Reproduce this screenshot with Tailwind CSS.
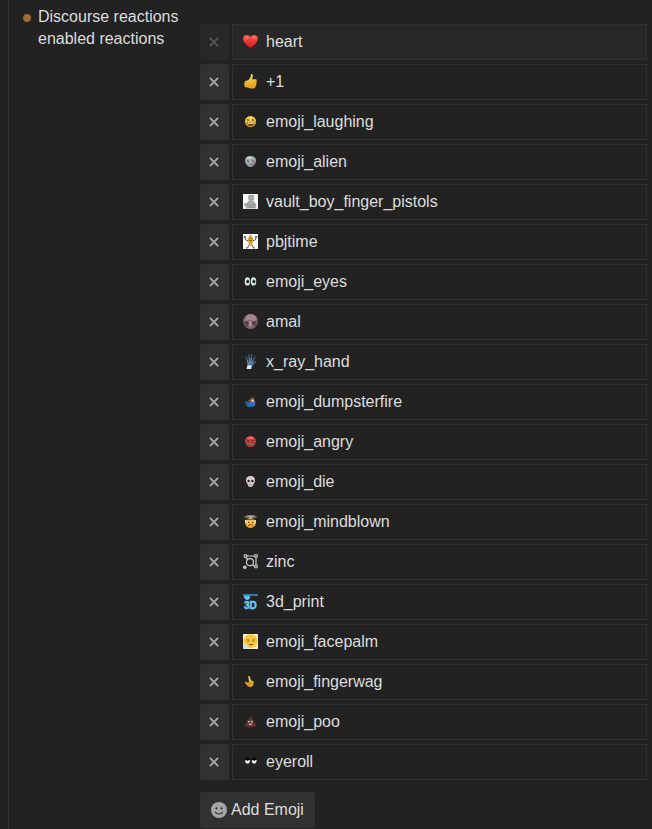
<!DOCTYPE html>
<html lang="en">
<head>
    <meta charset="UTF-8">
    <meta name="viewport" content="width=device-width, initial-scale=1.0">
    <title>Discourse reactions settings</title>
    <script src="https://cdn.jsdelivr.net/npm/@tailwindcss/browser@4"></script>
</head>
<body class="bg-[#222222] font-['Liberation_Sans',Arial,sans-serif] text-base text-[#dddddd]">
    <!-- Shared icon and gradients -->
    <svg class="absolute size-0" aria-hidden="true">
        <symbol id="times" viewBox="0 0 10 10">
            <path d="M.9.9 9.100 9.100M9.100.9.9 9.100" fill="none" stroke="currentColor" stroke-width="1.900"/>
        </symbol>
        <linearGradient id="gold" x2="0" y2="1">
            <stop stop-color="#ffdf62"/>
            <stop offset="1" stop-color="#e39a17"/>
        </linearGradient>
        <linearGradient id="red" x2="0" y2="1">
            <stop stop-color="#ff5a50"/>
            <stop offset="1" stop-color="#d8141c"/>
        </linearGradient>
    </svg>

    <main class="ml-2 flex min-h-screen border-l border-[#333333]">
        <!-- Setting name -->
        <div class="flex w-[191px] shrink-0 pt-[6px] pl-[14px]">
            <span class="mt-2 mr-[7px] size-2 shrink-0 rounded-full bg-[#9f6b35]"></span>
            <h1 class="leading-[22px]">Discourse reactions enabled reactions</h1>
        </div>

        <!-- Setting value -->
        <div class="min-w-0 flex-1 pt-6 pr-[5px]">
            <ul class="space-y-1">
                <li class="flex h-9 gap-[3px]">
                    <button type="button" disabled aria-label="Remove heart" class="flex w-[29px] shrink-0 items-center justify-center rounded-xs bg-[#282828] pr-px text-[#555555]"><svg class="size-[10px]"><use href="#times"/></svg></button>
                    <div class="flex flex-1 items-center gap-2 border border-[#313131] bg-[#282828] px-[10px]">
                        <svg class="mb-px size-[15px]" viewBox="0 0 15 15"><path d="M7.500 14C5 12.500 0 8.500 0 4.600 0 2.400 1.700 1 3.700 1c1.700 0 3.100.8 3.800 2.200C8.200 1.800 9.600 1 11.300 1 13.300 1 15 2.400 15 4.600c0 3.900-5 7.900-7.500 9.400Z" fill="url(#red)"/><ellipse cx="3.800" cy="3.500" rx="2" ry="1.200" fill="#ff6e64"/><ellipse cx="11" cy="3.500" rx="2" ry="1.200" fill="#ff6e64"/></svg>
                        <span>heart</span>
                    </div>
                </li>
                <li class="flex h-9 gap-[3px]">
                    <button type="button" aria-label="Remove +1" class="flex w-[29px] shrink-0 items-center justify-center rounded-xs bg-[#313131] pr-px text-[#a6a6a6]"><svg class="size-[10px]"><use href="#times"/></svg></button>
                    <div class="flex flex-1 items-center gap-2 border border-[#313131] px-[10px]">
                        <svg class="mb-px size-[15px]" viewBox="0 0 15 15"><path d="M2 7.200 5.500 6 7.600 3 8 .4c.2-.6 1.600-.4 1.800.8.200 1.400-.3 2.800-.8 4.100l3.600-.1c1.300.1 1.400 1.500.7 1.900.7.500.7 1.600-.1 2 .6.600.4 1.600-.3 1.900.4.700 0 1.500-.7 1.700.1.900-.4 1.600-1.300 1.700-2.600.4-4.600 0-6.300-.9L2 13.300C1 11.500 1 9 2 7.200Z" fill="url(#gold)"/><path d="M9.500 7.300h3.400M9.500 9.300h3.400M9.400 11.300h2.900" stroke="#d99a20" stroke-width=".5"/></svg>
                        <span>+1</span>
                    </div>
                </li>
                <li class="flex h-9 gap-[3px]">
                    <button type="button" aria-label="Remove emoji_laughing" class="flex w-[29px] shrink-0 items-center justify-center rounded-xs bg-[#313131] pr-px text-[#a6a6a6]"><svg class="size-[10px]"><use href="#times"/></svg></button>
                    <div class="flex flex-1 items-center gap-2 border border-[#313131] px-[10px]">
                        <svg class="mb-px size-[15px]" viewBox="0 0 15 15"><circle cx="7.500" cy="7.500" r="5.500" fill="url(#gold)"/><path d="M4 5.500 6 6 4.300 6.900M11 5 9 6l2 .6" fill="none" stroke="#6b4310" stroke-width=".8"/><path d="M3.700 8.300h7.800c-.3 2.200-1.800 3.700-3.900 3.700s-3.700-1.500-3.900-3.700Z" fill="#6b4310"/><path d="M4.300 8.400h6.700l-.4 1.400H4.700Z" fill="#fff4d8"/></svg>
                        <span>emoji_laughing</span>
                    </div>
                </li>
                <li class="flex h-9 gap-[3px]">
                    <button type="button" aria-label="Remove emoji_alien" class="flex w-[29px] shrink-0 items-center justify-center rounded-xs bg-[#313131] pr-px text-[#a6a6a6]"><svg class="size-[10px]"><use href="#times"/></svg></button>
                    <div class="flex flex-1 items-center gap-2 border border-[#313131] px-[10px]">
                        <svg class="mb-px size-[15px]" viewBox="0 0 15 15"><path d="M2 6.500C2 3.500 4.400 2 7.500 2S13 3.500 13 6.500c0 3-3 6.500-5.500 6.500S2 9.500 2 6.500Z" fill="#a0a9ab"/><path d="M12.900 6c0 3.500-2.900 7-5.400 7l3-4Z" fill="#9b6a70"/><ellipse cx="6.500" cy="4" rx="3" ry="1.200" fill="#c8d0cf"/><path d="m4 6.600 2 .8M11 6.600l-2 .8" stroke="#4a5356"/><path d="M6 10.300h3" stroke="#626a6d" stroke-width=".8"/></svg>
                        <span>emoji_alien</span>
                    </div>
                </li>
                <li class="flex h-9 gap-[3px]">
                    <button type="button" aria-label="Remove vault_boy_finger_pistols" class="flex w-[29px] shrink-0 items-center justify-center rounded-xs bg-[#313131] pr-px text-[#a6a6a6]"><svg class="size-[10px]"><use href="#times"/></svg></button>
                    <div class="flex flex-1 items-center gap-2 border border-[#313131] px-[10px]">
                        <svg class="mb-px size-[15px]" viewBox="0 0 15 15"><path d="M0 0h15v15H0Z" fill="#fbfbfb"/><path d="M1 9.500 4 9l1-2 6 .3 2 2.700.5 4.500H3l-.5-2.500L1 11.500Z" fill="#a4aaa5"/><circle cx="8.200" cy="4" r="3.200" fill="#b0b5b0"/><path d="M5.300 3C6 .5 10.500 0 11.400 3L8 2.400Z" fill="#949a95"/><path d="M7 4.300h.8M9 4.300h.8M7 5.800h2.400M4 10.500l3 1.500 4-1.500M5 13.500h6" fill="none" stroke="#808782" stroke-width=".6"/></svg>
                        <span>vault_boy_finger_pistols</span>
                    </div>
                </li>
                <li class="flex h-9 gap-[3px]">
                    <button type="button" aria-label="Remove pbjtime" class="flex w-[29px] shrink-0 items-center justify-center rounded-xs bg-[#313131] pr-px text-[#a6a6a6]"><svg class="size-[10px]"><use href="#times"/></svg></button>
                    <div class="flex flex-1 items-center gap-2 border border-[#313131] px-[10px]">
                        <svg class="mb-px size-[15px]" viewBox="0 0 15 15"><path d="M0 0h15v15H0Z" fill="#f8f8f8"/><path d="M1.500 3 3 6l3 1M13.500 3 12 6 9 7M6.500 10l-2 4H3M8.500 10l2 4H12" fill="none" stroke="#4a4540" stroke-width=".9"/><path d="M.7 2h2.300v2H.7ZM12 2h2.300v2H12Z" fill="#7b7875"/><path d="M6.600 1h1.600L10 4.500c.5 3-.3 5.800-2.500 7.500C5.500 10.500 4.700 7.500 5.200 4.500Z" fill="#dca32b"/><path d="M6.300 4.500h.8M8.200 4.500H9M6.500 6.500h2.200" stroke="#614414" stroke-width=".9"/></svg>
                        <span>pbjtime</span>
                    </div>
                </li>
                <li class="flex h-9 gap-[3px]">
                    <button type="button" aria-label="Remove emoji_eyes" class="flex w-[29px] shrink-0 items-center justify-center rounded-xs bg-[#313131] pr-px text-[#a6a6a6]"><svg class="size-[10px]"><use href="#times"/></svg></button>
                    <div class="flex flex-1 items-center gap-2 border border-[#313131] px-[10px]">
                        <svg class="mb-px size-[15px]" viewBox="0 0 15 15"><ellipse cx="4.400" cy="7.400" rx="2.700" ry="4.200" fill="#e4e5df"/><ellipse cx="10.500" cy="7.400" rx="2.700" ry="4.200" fill="#e4e5df"/><ellipse cx="4.800" cy="7.600" rx="1.600" ry="2" fill="#3d8068"/><ellipse cx="10.900" cy="7.600" rx="1.600" ry="2" fill="#3d8068"/><circle cx="4.800" cy="7.600" r="1.200" fill="#111111"/><circle cx="10.900" cy="7.600" r="1.200" fill="#111111"/></svg>
                        <span>emoji_eyes</span>
                    </div>
                </li>
                <li class="flex h-9 gap-[3px]">
                    <button type="button" aria-label="Remove amal" class="flex w-[29px] shrink-0 items-center justify-center rounded-xs bg-[#313131] pr-px text-[#a6a6a6]"><svg class="size-[10px]"><use href="#times"/></svg></button>
                    <div class="flex flex-1 items-center gap-2 border border-[#313131] px-[10px]">
                        <svg class="mb-px size-[15px]" viewBox="0 0 15 15"><circle cx="7.500" cy="7.500" r="7.400" fill="#856873"/><path d="M3 2.200C6-.5 11-.2 13.300 3c.7 2-.8 4-2.800 4L7 5.500 2.500 7Z" fill="#a3838d"/><path d="M0 8c1.500-1 3.500-.6 5.800.9L5 13.500C2 12.500.3 10.500 0 8ZM9 8.500l5-1.500c.2 2.500-1.200 5-3 6.300Z" fill="#604a55"/><path d="m6.500 7 1.800.3.500 4-1.500 1-1.500-1Z" fill="#b8959e"/><path d="m3 8 2.700 1.200M9 9.200l2.700-1.400" stroke="#261d25"/></svg>
                        <span>amal</span>
                    </div>
                </li>
                <li class="flex h-9 gap-[3px]">
                    <button type="button" aria-label="Remove x_ray_hand" class="flex w-[29px] shrink-0 items-center justify-center rounded-xs bg-[#313131] pr-px text-[#a6a6a6]"><svg class="size-[10px]"><use href="#times"/></svg></button>
                    <div class="flex flex-1 items-center gap-2 border border-[#313131] px-[10px]">
                        <svg class="mb-px size-[15px]" viewBox="0 0 15 15"><path d="M5 9 3.300 3M6.300 8 6 1M8 8 8.600.8M9.500 9l2-6M9.500 11 12.700 7.500" stroke="#3d5c7e" stroke-width="1.400" stroke-linecap="round"/><path d="M4.200 7.500 9.800 7.500 10.500 10 8.500 15H4.200Z" fill="#3c6594"/><path d="M4.300 11.500 8.500 11l-.3 4H3.600Z" fill="#dceafa"/><path d="m5.500 11-1-5M6.700 10V4M7.800 10l.6-6M8.500 10.500l1.800-4" stroke="#8eabc8" stroke-width=".6"/></svg>
                        <span>x_ray_hand</span>
                    </div>
                </li>
                <li class="flex h-9 gap-[3px]">
                    <button type="button" aria-label="Remove emoji_dumpsterfire" class="flex w-[29px] shrink-0 items-center justify-center rounded-xs bg-[#313131] pr-px text-[#a6a6a6]"><svg class="size-[10px]"><use href="#times"/></svg></button>
                    <div class="flex flex-1 items-center gap-2 border border-[#313131] px-[10px]">
                        <svg class="mb-px size-[15px]" viewBox="0 0 15 15"><path d="M5 7.500 6.500 5l1 .7L8.500 2.500l1.300 2 1.200-1.200.7 4.700Z" fill="#b0532c"/><path d="M8 7.500 9 5l1 1.300.8-.8.2 2.500Z" fill="#ffd39a"/><path d="m2.500 7 3 1.300 7-.8-.5 4.700-6.500.8L3 11.500Z" fill="#2c72be"/><path d="m2.500 7 3 1.300V13L3 11.500Z" fill="#205ea3"/></svg>
                        <span>emoji_dumpsterfire</span>
                    </div>
                </li>
                <li class="flex h-9 gap-[3px]">
                    <button type="button" aria-label="Remove emoji_angry" class="flex w-[29px] shrink-0 items-center justify-center rounded-xs bg-[#313131] pr-px text-[#a6a6a6]"><svg class="size-[10px]"><use href="#times"/></svg></button>
                    <div class="flex flex-1 items-center gap-2 border border-[#313131] px-[10px]">
                        <svg class="mb-px size-[15px]" viewBox="0 0 15 15"><circle cx="7.500" cy="7.500" r="5.500" fill="#cf3c3b"/><ellipse cx="7.500" cy="4" rx="3.300" ry="1.300" fill="#e8665f"/><path d="m4.300 6.200 1.900.8M10.700 6.200 8.800 7" stroke="#4b1518"/><path d="M3.200 8.600h8.600v2.800H3.200Z" fill="#57383a"/><path d="M4 10h7" stroke="#c4b0aa" stroke-width="1.100" stroke-dasharray="1.400 .4"/></svg>
                        <span>emoji_angry</span>
                    </div>
                </li>
                <li class="flex h-9 gap-[3px]">
                    <button type="button" aria-label="Remove emoji_die" class="flex w-[29px] shrink-0 items-center justify-center rounded-xs bg-[#313131] pr-px text-[#a6a6a6]"><svg class="size-[10px]"><use href="#times"/></svg></button>
                    <div class="flex flex-1 items-center gap-2 border border-[#313131] px-[10px]">
                        <svg class="mb-px size-[15px]" viewBox="0 0 15 15"><path d="M3 6.200C3 3.400 5 2 7.500 2S12 3.400 12 6.200c0 1.500-.5 2.500-1.300 3.300L9.800 12c-1.300 1.200-3.300 1.200-4.600 0l-.9-2.500C3.500 8.700 3 7.700 3 6.200Z" fill="#d9cdcf"/><ellipse cx="5.600" cy="7" rx="1.200" ry="1.300" fill="#29201f"/><ellipse cx="9.400" cy="7" rx="1.200" ry="1.300" fill="#29201f"/><path d="M7.500 8.300v.8M6 10.800h3" stroke="#7b6367" stroke-width=".7"/></svg>
                        <span>emoji_die</span>
                    </div>
                </li>
                <li class="flex h-9 gap-[3px]">
                    <button type="button" aria-label="Remove emoji_mindblown" class="flex w-[29px] shrink-0 items-center justify-center rounded-xs bg-[#313131] pr-px text-[#a6a6a6]"><svg class="size-[10px]"><use href="#times"/></svg></button>
                    <div class="flex flex-1 items-center gap-2 border border-[#313131] px-[10px]">
                        <svg class="mb-px size-[15px]" viewBox="0 0 15 15"><path d="M2 6h11c.5 4.500-1.800 8-5.500 8S1.500 10.500 2 6Z" fill="url(#gold)"/><path d="M1 2.800C2 .5 13 .2 14 2.500c0 1.300-2 1.700-3.500 1.800l1.500 2H3.500L5 4.500C3.500 4.300 1.300 4 1 2.800Z" fill="#776458"/><path d="M3 2.300c2-1 7-1.100 9 0L9 3.300 9.500 5H6l.3-1.700Z" fill="#b5a799"/><path d="M5 8.300h1.200M9 8.300h1.200" stroke="#573711" stroke-width="1.200"/><path d="M5.300 12c.5-1.700 3.200-2 4.500-.8" fill="none" stroke="#8a4f12"/></svg>
                        <span>emoji_mindblown</span>
                    </div>
                </li>
                <li class="flex h-9 gap-[3px]">
                    <button type="button" aria-label="Remove zinc" class="flex w-[29px] shrink-0 items-center justify-center rounded-xs bg-[#313131] pr-px text-[#a6a6a6]"><svg class="size-[10px]"><use href="#times"/></svg></button>
                    <div class="flex flex-1 items-center gap-2 border border-[#313131] px-[10px]">
                        <svg class="mb-px size-[15px]" viewBox="0 0 15 15" fill="none" stroke="#c9c9c9" stroke-width="1.200"><circle cx="7" cy="8.200" r="3.500"/><circle cx="2.500" cy="2" r="1.400"/><circle cx="13" cy="2" r="1.400"/><circle cx="13" cy="12.500" r="1.400"/><path d="M4 2h7.500M13 3.500V11M11.500 12.500 9.500 11M3 3.500l1.700 2"/><circle cx="1.800" cy="13.200" r="1.200" fill="#c9c9c9"/></svg>
                        <span>zinc</span>
                    </div>
                </li>
                <li class="flex h-9 gap-[3px]">
                    <button type="button" aria-label="Remove 3d_print" class="flex w-[29px] shrink-0 items-center justify-center rounded-xs bg-[#313131] pr-px text-[#a6a6a6]"><svg class="size-[10px]"><use href="#times"/></svg></button>
                    <div class="flex flex-1 items-center gap-2 border border-[#313131] px-[10px]">
                        <svg class="mb-px size-[15px] overflow-visible" viewBox="0 0 15 15"><path d="M0 0h15v2H0Z" fill="#337aa6"/><path d="M1 1.700h6v2.500L5 6H3.500L1 4Z" fill="#60c1f5"/><text x="1" y="14.500" class="text-[10px] font-bold" fill="#6dcafb" stroke="#6dcafb" stroke-width=".5">3D</text></svg>
                        <span>3d_print</span>
                    </div>
                </li>
                <li class="flex h-9 gap-[3px]">
                    <button type="button" aria-label="Remove emoji_facepalm" class="flex w-[29px] shrink-0 items-center justify-center rounded-xs bg-[#313131] pr-px text-[#a6a6a6]"><svg class="size-[10px]"><use href="#times"/></svg></button>
                    <div class="flex flex-1 items-center gap-2 border border-[#313131] px-[10px]">
                        <svg class="mb-px size-[15px]" viewBox="0 0 15 15"><path d="M0 0h15v15H0Z" fill="#f4efd9"/><circle cx="7.500" cy="7.300" r="7" fill="#f8c638"/><path d="M3.500 5.300 6.500 6M9 6l3-.7" stroke="#a87a20" stroke-width=".7"/><path d="M4.300 7h1.700M9.500 7h1.700M6 10.500h4" stroke="#785019"/><path d="M0 10.500 2 9l3.500 3.500-1 2.500H0Z" fill="#cfe0eb"/></svg>
                        <span>emoji_facepalm</span>
                    </div>
                </li>
                <li class="flex h-9 gap-[3px]">
                    <button type="button" aria-label="Remove emoji_fingerwag" class="flex w-[29px] shrink-0 items-center justify-center rounded-xs bg-[#313131] pr-px text-[#a6a6a6]"><svg class="size-[10px]"><use href="#times"/></svg></button>
                    <div class="flex flex-1 items-center gap-2 border border-[#313131] px-[10px]">
                        <svg class="mb-px size-[15px]" viewBox="0 0 15 15"><path d="M5.200 2.500c.7-.7 1.400-.4 1.700.4L8 6.500c1.500 0 2.700.7 2.700 2.200 0 2.300-1.200 4.300-3.500 4.300-1.800 0-2.800-1-3.800-2.500L2 8.500c.3-.8 1-.8 1.700-.3l1.500.9.800-2Z" fill="url(#gold)"/><path d="M6.500 7.500v2M8.300 7.700v2M4.500 9.800l3 .7" stroke="#8c5c14" stroke-width=".6"/></svg>
                        <span>emoji_fingerwag</span>
                    </div>
                </li>
                <li class="flex h-9 gap-[3px]">
                    <button type="button" aria-label="Remove emoji_poo" class="flex w-[29px] shrink-0 items-center justify-center rounded-xs bg-[#313131] pr-px text-[#a6a6a6]"><svg class="size-[10px]"><use href="#times"/></svg></button>
                    <div class="flex flex-1 items-center gap-2 border border-[#313131] px-[10px]">
                        <svg class="mb-px size-[15px]" viewBox="0 0 15 15"><path d="M7 2.300c2 .4 2.800 1.700 2.300 2.900 1.700.5 2.300 2 1.700 3.200 1.900.8 2.300 2.800 1 4-2 1-7.500 1-9.500 0C1.200 11 2 9 3.800 8.400 3.300 6.800 4 5.600 5.600 5.200 6.500 4.500 7.300 3.600 7 2.300Z" fill="#5e3426"/><path d="M11 8.500c1.800.8 2.200 2.500 1 4l-2 .5Z" fill="#79242e"/><circle cx="6" cy="7.700" r=".9" fill="#cfc6bb"/><circle cx="8.900" cy="7.700" r=".9" fill="#cfc6bb"/><path d="M5.500 9.800h4c-.4 1.700-3.600 1.700-4 0Z" fill="#cfc6bb"/></svg>
                        <span>emoji_poo</span>
                    </div>
                </li>
                <li class="flex h-9 gap-[3px]">
                    <button type="button" aria-label="Remove eyeroll" class="flex w-[29px] shrink-0 items-center justify-center rounded-xs bg-[#313131] pr-px text-[#a6a6a6]"><svg class="size-[10px]"><use href="#times"/></svg></button>
                    <div class="flex flex-1 items-center gap-2 border border-[#313131] px-[10px]">
                        <svg class="mb-px size-[15px]" viewBox="0 0 15 15"><path d="M2 6h5c0 2.300-1 3.600-2.500 3.600S2 8.300 2 6ZM8.700 6h5c0 2.300-1 3.600-2.500 3.600S8.700 8.300 8.700 6Z" fill="#f1f1f1"/><path d="M1.500 4.500C3 3 6 3 7 4.700v1.400l-1.500.1-.8.9-1-.9H1.500ZM8.200 4.500c1.500-1.500 4.500-1.500 5.500.2v1.400l-1.500.1-.8.9-1-.9H8.200Z" fill="#080808"/></svg>
                        <span>eyeroll</span>
                    </div>
                </li>
            </ul>

            <button type="button" class="mt-3 flex h-9 items-center gap-1 rounded-xs bg-[#313131] px-[11px]">
                <svg class="size-4 text-[#a6a6a6]" viewBox="0 0 16 16"><circle cx="8" cy="8" r="8" fill="currentColor"/><circle cx="5.400" cy="6.400" r="1.100" fill="#313131"/><circle cx="10.600" cy="6.400" r="1.100" fill="#313131"/><path d="M4.300 10.200c1.800 2.300 5.600 2.300 7.400 0" fill="none" stroke="#313131" stroke-width="1.100" stroke-linecap="round"/></svg>
                Add Emoji
            </button>
        </div>
    </main>
</body>
</html>
